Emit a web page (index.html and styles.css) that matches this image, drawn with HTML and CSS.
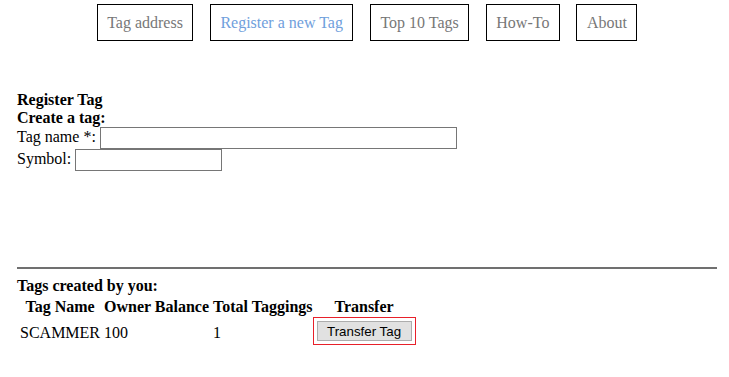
FILE: index.html
```html
<!DOCTYPE html>
<html lang="en">
<head>
    <meta charset="UTF-8">
    <meta name="viewport" content="width=device-width, initial-scale=1.0">
    <title>Register a new Tag</title>
    <link rel="stylesheet" href="styles.css">
</head>
<body>
    <div class="page">
        <nav class="nav">
            <a class="nav-item" href="#">Tag address</a>
            <a class="nav-item active" href="#">Register a new Tag</a>
            <a class="nav-item" href="#">Top 10 Tags</a>
            <a class="nav-item" href="#">How-To</a>
            <a class="nav-item" href="#">About</a>
        </nav>

        <section class="register">
            <div class="line bold">Register Tag</div>
            <div class="line bold">Create a tag:</div>
            <div class="field">
                <label for="tag-name">Tag name *:</label>
                <input type="text" id="tag-name" class="input-name">
            </div>
            <div class="field">
                <label for="tag-symbol">Symbol:</label>
                <input type="text" id="tag-symbol" class="input-symbol">
            </div>
        </section>

        <hr class="divider">

        <section class="my-tags">
            <div class="line bold">Tags created by you:</div>
            <table class="tags-table">
                <tr>
                    <th>Tag Name</th>
                    <th>Owner Balance</th>
                    <th>Total Taggings</th>
                    <th>Transfer</th>
                </tr>
                <tr>
                    <td>SCAMMER</td>
                    <td>100</td>
                    <td>1</td>
                    <td><button class="transfer-btn">Transfer Tag</button></td>
                </tr>
            </table>
        </section>
    </div>
</body>
</html>
```

FILE: styles.css
```css
body {
    margin: 0;
    font-family: "Liberation Serif", "Times New Roman", serif;
    font-size: 16px;
    color: #000;
    background: #fff;
}
.page {
    width: 700px;
    padding: 4px 0 0 17px;
}
.nav {
    display: flex;
    justify-content: center;
    gap: 16.5px;
}
.nav-item {
    display: block;
    padding: 8px 9.5px;
    line-height: 19px;
    border: 1px solid #000;
    color: #777;
    text-decoration: none;
}
.nav-item.active {
    color: #6fa0dc;
}
.register {
    margin-top: 50px;
}
.line {
    line-height: 18px;
}
.bold {
    font-weight: bold;
}
.field {
    display: flex;
    align-items: flex-start;
    gap: 4px;
    height: 22px;
}
.field label {
    line-height: 18px;
    padding-top: 1px;
}
.field input {
    box-sizing: border-box;
    height: 22px;
    margin: 0;
    padding: 1px 2px;
    border: 1px solid #767676;
    font-family: "Liberation Sans", Arial, sans-serif;
    font-size: 13.33px;
}
.input-name {
    width: 357px;
}
.input-symbol {
    width: 147px;
}
.divider {
    margin: 96px 0 8px;
    border: none;
    border-top: 2px solid #707070;
    height: 0;
}
.tags-table {
    border-spacing: 2px;
}
.tags-table th,
.tags-table td {
    padding: 1px;
    line-height: 18px;
    text-align: left;
}
.tags-table th {
    text-align: center;
}
.transfer-btn {
    display: block;
    box-sizing: border-box;
    width: 95px;
    height: 20px;
    margin: 1px 0 4px;
    padding: 0;
    background: #e1e1e1;
    border: 1px solid #adadad;
    outline: 1px solid #e8202a;
    outline-offset: 3px;
    font-family: "Liberation Sans", Arial, sans-serif;
    font-size: 13.33px;
    color: #000;
}
```
